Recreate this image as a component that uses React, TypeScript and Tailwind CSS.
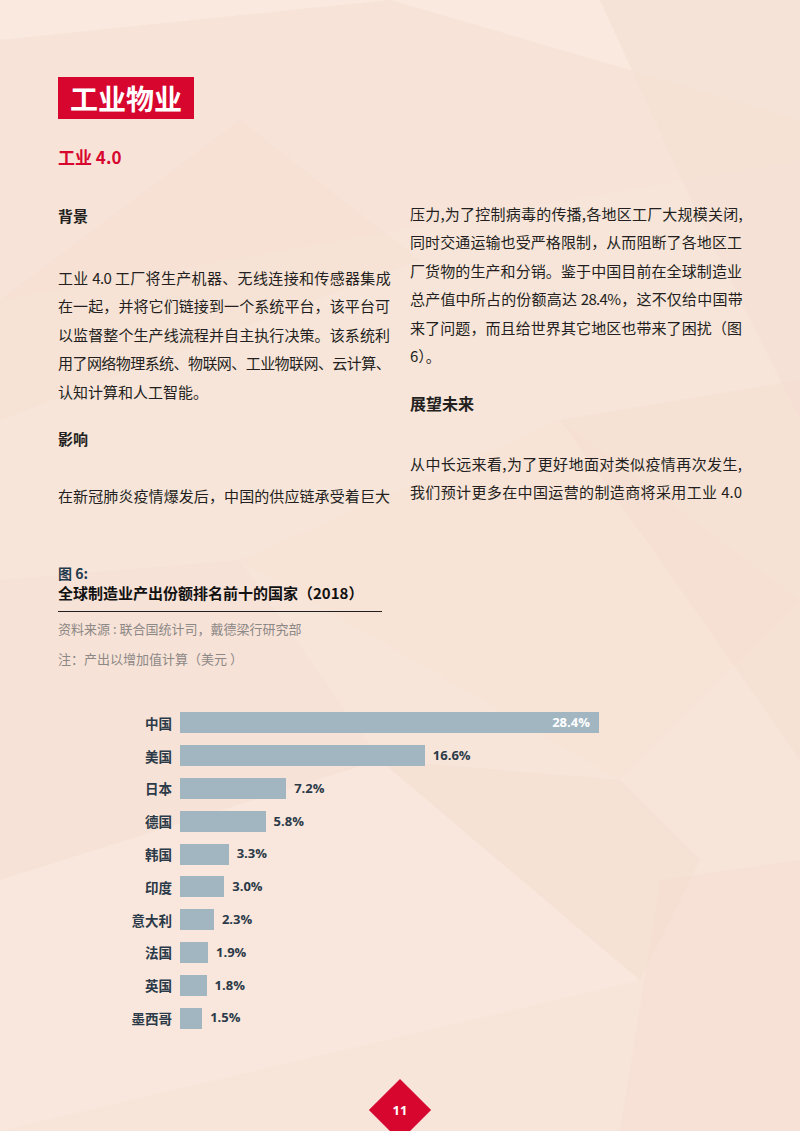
import React from "react";

const leftTop = [
  "工业 4.0 工厂将生产机器、无线连接和传感器集成",
  "在一起，并将它们链接到一个系统平台，该平台可",
  "以监督整个生产线流程并自主执行决策。该系统利",
  "用了网络物理系统、物联网、工业物联网、云计算、",
  "认知计算和人工智能。",
];

const rightTop = [
  "压力,为了控制病毒的传播,各地区工厂大规模关闭,",
  "同时交通运输也受严格限制，从而阻断了各地区工",
  "厂货物的生产和分销。鉴于中国目前在全球制造业",
  "总产值中所占的份额高达 28.4%，这不仅给中国带",
  "来了问题，而且给世界其它地区也带来了困扰（图",
  "6）。",
];

const rightBottom = [
  "从中长远来看,为了更好地面对类似疫情再次发生,",
  "我们预计更多在中国运营的制造商将采用工业 4.0",
];

const data = [
  { name: "中国", value: 28.4 },
  { name: "美国", value: 16.6 },
  { name: "日本", value: 7.2 },
  { name: "德国", value: 5.8 },
  { name: "韩国", value: 3.3 },
  { name: "印度", value: 3.0 },
  { name: "意大利", value: 2.3 },
  { name: "法国", value: 1.9 },
  { name: "英国", value: 1.8 },
  { name: "墨西哥", value: 1.5 },
];

const Lines = ({ lines, last = false }: { lines: string[]; last?: boolean }) => (
  <div className="text-[15px] leading-[28.4px] text-[#231f20]">
    {lines.map((l, i) => (
      <div
        key={i}
        className={
          "whitespace-nowrap " +
          (i < lines.length - 1 || last ? "text-justify [text-align-last:justify] " : "") +
          (l.length > 22 ? "tracking-[-0.65px]" : "")
        }
      >
        {l}
      </div>
    ))}
  </div>
);

const Background = () => (
  <svg className="absolute inset-0 w-full h-full" viewBox="0 0 800 1131" preserveAspectRatio="none">
    <rect width="800" height="1131" fill="#f8e5da" />
    <polygon points="0,0 800,0 800,120 390,0 0,40" fill="#f9e9df" />
    <polygon points="0,40 390,0 800,120 800,160 0,300" fill="#f7e3d8" />
    <polygon points="0,300 240,120 420,260 0,420" fill="#f6e0d4" opacity="0.6" />
    <polygon points="600,0 800,0 800,420 700,220" fill="#f5e0d4" opacity="0.7" />
    <polygon points="240,560 560,420 800,600 620,780" fill="#f7e2d6" opacity="0.8" />
    <polygon points="0,580 240,560 380,760 0,880" fill="#f6e1d5" opacity="0.7" />
    <polygon points="560,420 800,380 800,760 660,560" fill="#f5ded2" opacity="0.6" />
    <polygon points="0,880 380,760 640,980 0,1131" fill="#f9e7dd" opacity="0.8" />
    <polygon points="660,880 800,860 800,1131 620,1131" fill="#f6e0d4" opacity="0.7" />
    <polygon points="380,760 620,780 700,860 640,980" fill="#f4ddd0" opacity="0.5" />
  </svg>
);

export default function App() {
  return (
    <div className="relative w-[800px] h-[1131px] overflow-hidden font-['Noto_Sans_CJK_SC',sans-serif]">
      <Background />
      <div className="relative px-[58px] pt-[77px]">
        <div className="inline-flex items-center justify-center w-[136px] h-[42px] bg-[#d7062f] text-white text-[28px] font-bold leading-none">
          工业物业
        </div>
        <div className="mt-[26px] text-[17px] leading-[24px] font-bold text-[#d7062f]">工业 4.0</div>

        <div className="mt-[31px] flex gap-[20px]">
          <div className="w-[332px]">
            <div className="pt-[2px] text-[15px] leading-[28px] font-bold text-[#231f20]">背景</div>
            <div className="mt-[34px]">
              <Lines lines={leftTop} />
            </div>
            <div className="mt-[19px] text-[15px] leading-[28px] font-bold text-[#231f20]">影响</div>
            <div className="mt-[29px]">
              <Lines lines={["在新冠肺炎疫情爆发后，中国的供应链承受着巨大"]} last />
            </div>
          </div>
          <div className="w-[332px]">
            <Lines lines={rightTop} />
            <div className="mt-[19px] text-[16px] leading-[28px] font-bold text-[#231f20]">展望未来</div>
            <div className="mt-[33px] text-[15px] leading-[27.3px] text-[#231f20]">
              {rightBottom.map((l, i) => (
                <div key={i} className="whitespace-nowrap text-justify [text-align-last:justify]">
                  {l}
                </div>
              ))}
            </div>
          </div>
        </div>

        <div className="mt-[53px] w-[324px]">
          <div className="text-[14px] leading-[20px] font-bold text-[#1f3a4d]">图 6:</div>
          <div className="text-[15px] leading-[20px] font-bold text-[#111]">全球制造业产出份额排名前十的国家（2018）</div>
          <div className="mt-[8px] h-px bg-[#231f20]" />
          <div className="mt-[7px] text-[13px] leading-[20px] text-[#8c8886]">资料来源 : 联合国统计司，戴德梁行研究部</div>
          <div className="mt-[10px] text-[13px] leading-[20px] text-[#8c8886]">注：产出以增加值计算（美元 ）</div>
        </div>

        <div className="mt-[43px] flex flex-col gap-[11.8px]">
          {data.map((d, i) => (
            <div key={d.name} className="flex items-center h-[21px]">
              <div className="w-[122px] pr-[8px] text-right text-[13.5px] font-bold text-[#2b3a48]">{d.name}</div>
              <div
                className="h-[21px] bg-[#a2b6c2] flex items-center justify-end"
                style={{ width: d.value * 14.75 }}
              >
                {i === 0 && (
                  <span className="pr-[9px] text-[13px] font-bold text-white font-['Open_Sans',sans-serif]">
                    {d.value.toFixed(1)}%
                  </span>
                )}
              </div>
              {i > 0 && (
                <span className="ml-[8px] text-[13px] font-bold text-[#2b3a48] font-['Open_Sans',sans-serif]">
                  {d.value.toFixed(1)}%
                </span>
              )}
            </div>
          ))}
        </div>
      </div>

      <div className="absolute left-[378px] top-[1088px] w-[44px] h-[44px] bg-[#d7062f] rotate-45" />
      <div className="absolute left-[380px] top-[1100px] w-[40px] text-center text-[13px] leading-[20px] font-bold text-white font-['Open_Sans',sans-serif]">
        11
      </div>
    </div>
  );
}
